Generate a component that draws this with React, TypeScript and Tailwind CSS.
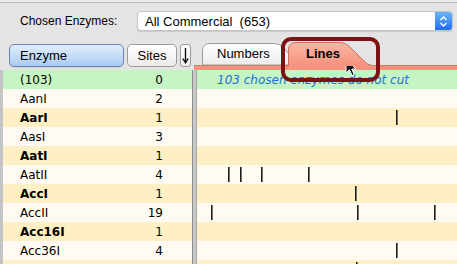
import React from "react";

type Row = { name: string; sites: string; bold: boolean; ticks: number[] };

const rows: Row[] = [
  { name: "AanI", sites: "2", bold: false, ticks: [] },
  { name: "AarI", sites: "1", bold: true, ticks: [199] },
  { name: "AasI", sites: "3", bold: false, ticks: [] },
  { name: "AatI", sites: "1", bold: true, ticks: [] },
  { name: "AatII", sites: "4", bold: false, ticks: [31, 43, 64, 111] },
  { name: "AccI", sites: "1", bold: true, ticks: [158] },
  { name: "AccII", sites: "19", bold: false, ticks: [14, 160, 237] },
  { name: "Acc16I", sites: "1", bold: true, ticks: [] },
  { name: "Acc36I", sites: "4", bold: false, ticks: [199] },
  { name: "", sites: "", bold: true, ticks: [159] },
];

function Ticks({ ticks }: { ticks: number[] }) {
  return (
    <svg width="260" height="19" className="block">
      {ticks.map((x, i) => (
        <rect key={i} x={x} y={2} width={1.6} height={15} fill="#1c1c1c" />
      ))}
    </svg>
  );
}

export default function App() {
  return (
    <div className="relative w-[457px] h-[271px] overflow-hidden bg-white font-['Liberation_Sans',Arial,sans-serif] text-black">
      <div className="flex flex-col bg-[#e4e4e4]">
        {/* top strip */}
        <div className="h-[3px] bg-[#ececec] border-b border-[#b9b9b9]" />

        {/* popup row */}
        <div className="h-[35px] flex items-start pt-[8px]">
          <div className="w-[137px] pl-[20px] h-[20px] flex items-center text-[12px] leading-none">
            Chosen Enzymes:
          </div>
          <div className="w-[316px] h-[20px] flex items-stretch rounded-[4px] bg-white border border-[#c4c4c4] shadow-[0_1px_1px_rgba(0,0,0,0.12)] overflow-hidden">
            <div className="flex-1 flex items-center pl-[7px] text-[13px] whitespace-pre leading-none">
              {"All Commercial  (653)"}
            </div>
            <div className="w-[17px] flex items-center justify-center bg-gradient-to-b from-[#6cb3fc] to-[#1c6ef3]">
              <svg width="9" height="13" viewBox="0 0 9 13">
                <path d="M1.5 5 L4.5 2 L7.5 5" fill="none" stroke="white" strokeWidth="1.4" />
                <path d="M1.5 8 L4.5 11 L7.5 8" fill="none" stroke="white" strokeWidth="1.4" />
              </svg>
            </div>
          </div>
        </div>

        {/* buttons + tabs row */}
        <div className="h-[32px] flex">
          <div className="w-[194px] flex items-start pt-[6px] pl-[9px] gap-[3px]">
            <div className="w-[115px] h-[23px] rounded-[5px] border border-[#6a80b8] bg-gradient-to-b from-[#e2eefc] to-[#a9cbf3] flex items-center pl-[10px] text-[13px] shadow-[0_1px_0_rgba(0,0,0,0.08)]">
              Enzyme
            </div>
            <div className="w-[50px] h-[23px] rounded-[5px] border border-[#9a9a9a] bg-gradient-to-b from-white to-[#ececec] flex items-center justify-center text-[13px]">
              Sites
            </div>
            <div className="w-[11px] h-[23px] rounded-[3px] border border-[#9a9a9a] bg-gradient-to-b from-white to-[#ececec] flex items-center justify-center">
              <svg width="7" height="17" viewBox="0 0 7 17">
                <path d="M3.5 1 V15" stroke="#111" strokeWidth="1.4" />
                <path d="M0.8 11.5 L3.5 15.8 L6.2 11.5" fill="none" stroke="#111" strokeWidth="1.4" />
              </svg>
            </div>
          </div>
          <div className="flex-1 flex flex-col">
            <div className="h-[27px] flex items-end pl-[8px]">
              <div className="relative w-[96px] h-[22px] flex items-center pl-[15px] text-[13px]">
                <svg className="absolute inset-0" width="96" height="22" viewBox="0 0 96 22">
                  <defs>
                    <linearGradient id="ng" x1="0" y1="0" x2="0" y2="1">
                      <stop offset="0" stopColor="#ffffff" />
                      <stop offset="1" stopColor="#ececec" />
                    </linearGradient>
                  </defs>
                  <path d="M0.5 22 V8 Q0.5 0.5 8 0.5 H72 Q78 0.5 82 5 L94 20 L95 22 Z" fill="url(#ng)" stroke="#9c9c9c" strokeWidth="1" />
                </svg>
                <span className="relative">Numbers</span>
              </div>
              <div className="relative z-10 -ml-[10px] -mb-px w-[84px] h-[24px] flex items-center pl-[18px] text-[13px] font-bold">
                <svg className="absolute inset-0" width="84" height="24" viewBox="0 0 84 24">
                  <defs>
                    <linearGradient id="lg" x1="0" y1="0" x2="0" y2="1">
                      <stop offset="0" stopColor="#fcb6a6" />
                      <stop offset="1" stopColor="#f6927e" />
                    </linearGradient>
                  </defs>
                  <path d="M0.5 24 V8 Q0.5 0.5 8 0.5 H52 Q58 0.5 62 5 L76 19 Q79 22.5 84 23.5 V24 Z" fill="url(#lg)" />
                  <path d="M0.5 24 V8 Q0.5 0.5 8 0.5 H52 Q58 0.5 62 5 L76 19 Q79 22.5 84 23.5" fill="none" stroke="#d06e5f" strokeWidth="1" />
                </svg>
                <span className="relative">Lines</span>
              </div>
            </div>
            <div className="h-[5px] bg-[#f6937f] border-t border-[#d8735f]" />
          </div>
        </div>

        {/* content */}
        <div className="h-[194px] flex overflow-hidden font-['DejaVu_Sans',Verdana,sans-serif] text-[12px]">
          <div className="w-[192px] border-l-[3px] border-[#c4c4c4] flex flex-col">
            <div className="h-[19px] shrink-0 bg-[#c6f5c4] flex items-center pl-[17px] pr-[29px] justify-between">
              <span>(103)</span>
              <span>0</span>
            </div>
            {rows.map((r, i) => (
              <div
                key={i}
                className={
                  "h-[19px] shrink-0 flex items-center pl-[17px] pr-[29px] justify-between " +
                  (i % 2 === 0 ? "bg-[#fffbf2]" : "bg-[#feefc4]")
                }
              >
                <span className={r.bold ? "font-bold" : ""}>{r.name}</span>
                <span>{r.sites}</span>
              </div>
            ))}
          </div>
          <div className="w-[5px] bg-[#c8c8c8] border-l border-r border-l-[#8c8c8c] border-r-[#a6a6a6]" />
          <div className="flex-1 flex flex-col">
            <div className="h-[19px] shrink-0 bg-[#c6f5c4] flex items-center pl-[20px] italic text-[#1d6fd5]">
              103 chosen enzymes do not cut
            </div>
            {rows.map((r, i) => (
              <div
                key={i}
                className={"h-[19px] shrink-0 " + (i % 2 === 0 ? "bg-[#fffbf2]" : "bg-[#feefc4]")}
              >
                <Ticks ticks={r.ticks} />
              </div>
            ))}
          </div>
        </div>
      </div>

      {/* highlight box */}
      <div className="absolute left-[281px] top-[37px] w-[99px] h-[45px] rounded-[10px] border-[4px] border-[#7a1216]" />

      {/* cursor */}
      <svg className="absolute left-[345px] top-[58px]" width="13" height="19" viewBox="0 0 13 19">
        <path d="M1 1 L1 15 L4.5 11.8 L7 17.5 L9.2 16.5 L6.8 11 L11 11 Z" fill="#111" stroke="white" strokeWidth="1" strokeLinejoin="round" />
      </svg>
    </div>
  );
}
